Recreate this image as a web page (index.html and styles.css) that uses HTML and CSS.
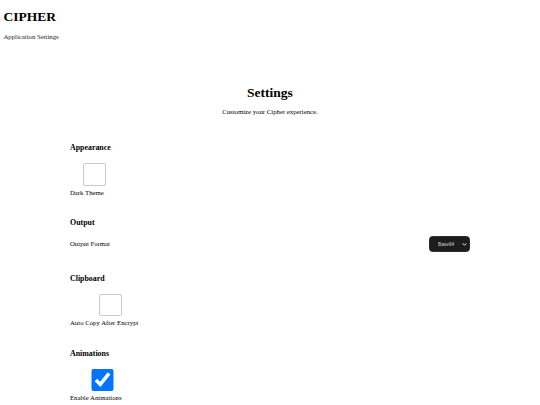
FILE: index.html
```html
<!DOCTYPE html>
<html lang="en">
<head>
<meta charset="utf-8">
<title>Cipher Settings</title>
<link rel="stylesheet" href="styles.css">
</head>
<body>
  <header class="app-header">
    <h1 class="app-title">CIPHER</h1>
    <p class="app-subtitle">Application Settings</p>
  </header>
  <main class="settings">
    <h2 class="settings-title">Settings</h2>
    <p class="settings-intro">Customize your Cipher experience.</p>

    <section class="settings-section">
      <h3 class="section-title">Appearance</h3>
      <label class="check-item">
        <input class="check-box" type="checkbox">
        <span class="item-label">Dark Theme</span>
      </label>
    </section>

    <section class="settings-section">
      <h3 class="section-title">Output</h3>
      <div class="select-row">
        <span class="item-label">Output Format</span>
        <span class="select-wrap">
          <select class="format-select">
            <option>Base64</option>
            <option>Hex</option>
          </select>
          <svg class="select-arrow" viewBox="0 0 10 10" aria-hidden="true">
            <path d="M2 3.5 L5 6.5 L8 3.5" fill="none" stroke="#ffffff" stroke-width="2" stroke-linecap="round" stroke-linejoin="round"/>
          </svg>
        </span>
      </div>
    </section>

    <section class="settings-section">
      <h3 class="section-title">Clipboard</h3>
      <label class="check-item">
        <input class="check-box" type="checkbox">
        <span class="item-label">Auto Copy After Encrypt</span>
      </label>
    </section>

    <section class="settings-section">
      <h3 class="section-title">Animations</h3>
      <label class="check-item">
        <input class="check-box" type="checkbox" checked>
        <span class="item-label">Enable Animations</span>
      </label>
    </section>
  </main>
</body>
</html>
```

FILE: styles.css
```css
html, body {
  background: #ffffff;
}

body {
  margin: 3.4px;
  font-family: "Liberation Serif", "Times New Roman", serif;
  font-size: 6.75px;
  line-height: 8px;
  color: #000;
}

.app-title {
  font-size: 13.5px;
  line-height: 16px;
  font-weight: bold;
  margin: 6px 0 7.7px;
}

.app-subtitle {
  margin: 0;
  color: #222;
}

.settings {
  max-width: 400px;
  margin: 0 auto;
}

.settings-title {
  font-size: 13.5px;
  line-height: 16px;
  font-weight: bold;
  text-align: center;
  margin: 43.7px 0 6.8px;
}

.settings-intro {
  text-align: center;
  margin: 0 0 27.5px;
}

.settings-section {
  margin-bottom: 21.5px;
}

.section-title {
  font-size: 7.9px;
  line-height: 9px;
  font-weight: bold;
  margin: 0 0 11px;
}

.check-item {
  display: inline-flex;
  flex-direction: column;
  align-items: center;
}

.check-box {
  width: 22.5px;
  height: 22.5px;
  margin: 0 0 3px 13px;
}

.check-box:not(:checked) {
  appearance: none;
  -webkit-appearance: none;
  box-sizing: border-box;
  background: #ffffff;
  border: 1px solid #c9c9c9;
  border-radius: 2px;
}

.check-item .item-label {
  align-self: flex-start;
}

.select-row {
  display: flex;
  justify-content: space-between;
  align-items: center;
  margin-top: -2px;
}

.select-wrap {
  position: relative;
  display: inline-flex;
}

.format-select {
  appearance: none;
  -webkit-appearance: none;
  box-sizing: border-box;
  width: 41px;
  height: 16px;
  margin: 0;
  padding: 0 10px 0 8px;
  font-family: "Liberation Sans", Arial, sans-serif;
  font-size: 4.8px;
  color: #d0d0d0;
  background-color: #1c1c1c;
  border: 1px solid #2e2e2e;
  border-radius: 3.5px;
}

.select-arrow {
  position: absolute;
  right: 3px;
  top: 5.5px;
  width: 5px;
  height: 5px;
  pointer-events: none;
}
```
